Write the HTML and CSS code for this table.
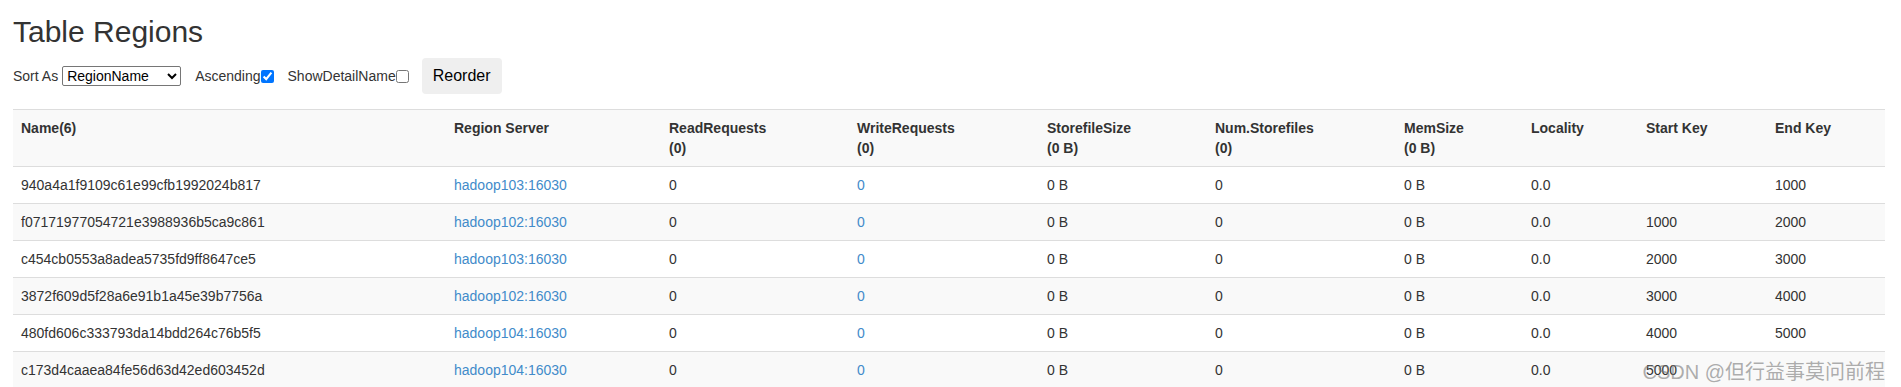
FILE: index.html
```html
<!DOCTYPE html>
<html>
    <head>
        <meta charset="UTF-8">
        <title>Table Regions</title>
        <link rel="stylesheet" href="styles.css">
    </head>
    <body>
        <div class="page">
            <h2>Table Regions</h2>
            <!--sort form-->
            <form class="sort_form" onsubmit="return false;">
                <label for="sel">Sort As</label>
                <select id="sel" name="sel">
                    <option value="regionname">RegionName</option>
                    <option value="readrequest">ReadRequest</option>
                    <option value="writerequest">WriteRequest</option>
                    <option value="storefilesize">StorefileSize</option>
                    <option value="filecount">Num.Storefiles</option>
                    <option value="memstore">MemstoreSize</option>
                    <option value="locality">Locality</option>
                </select>
                <label class="chk" for="ascending">Ascending</label><input type="checkbox" id="ascending" name="ascending" checked>
                <label class="chk" for="showwhole">ShowDetailName</label><input type="checkbox" id="showwhole" name="showwhole">
                <button class="reorder" type="submit">Reorder</button>
            </form>
            <!--regions-->
            <table class="regions">
                <colgroup>
                    <col class="w_name">
                    <col class="w_server">
                    <col class="w_read">
                    <col class="w_write">
                    <col class="w_size">
                    <col class="w_files">
                    <col class="w_mem">
                    <col class="w_loc">
                    <col class="w_start">
                    <col class="w_end">
                </colgroup>
                <thead>
                    <tr>
                        <th>Name(6)</th>
                        <th>Region Server</th>
                        <th>ReadRequests<br>(0)</th>
                        <th>WriteRequests<br>(0)</th>
                        <th>StorefileSize<br>(0 B)</th>
                        <th>Num.Storefiles<br>(0)</th>
                        <th>MemSize<br>(0 B)</th>
                        <th>Locality</th>
                        <th>Start Key</th>
                        <th>End Key</th>
                    </tr>
                </thead>
                <tbody>
                    <tr>
                        <td>940a4a1f9109c61e99cfb1992024b817</td>
                        <td><a href="#">hadoop103:16030</a></td>
                        <td>0</td>
                        <td><a href="#">0</a></td>
                        <td>0 B</td>
                        <td>0</td>
                        <td>0 B</td>
                        <td>0.0</td>
                        <td></td>
                        <td>1000</td>
                    </tr>
                    <tr>
                        <td>f07171977054721e3988936b5ca9c861</td>
                        <td><a href="#">hadoop102:16030</a></td>
                        <td>0</td>
                        <td><a href="#">0</a></td>
                        <td>0 B</td>
                        <td>0</td>
                        <td>0 B</td>
                        <td>0.0</td>
                        <td>1000</td>
                        <td>2000</td>
                    </tr>
                    <tr>
                        <td>c454cb0553a8adea5735fd9ff8647ce5</td>
                        <td><a href="#">hadoop103:16030</a></td>
                        <td>0</td>
                        <td><a href="#">0</a></td>
                        <td>0 B</td>
                        <td>0</td>
                        <td>0 B</td>
                        <td>0.0</td>
                        <td>2000</td>
                        <td>3000</td>
                    </tr>
                    <tr>
                        <td>3872f609d5f28a6e91b1a45e39b7756a</td>
                        <td><a href="#">hadoop102:16030</a></td>
                        <td>0</td>
                        <td><a href="#">0</a></td>
                        <td>0 B</td>
                        <td>0</td>
                        <td>0 B</td>
                        <td>0.0</td>
                        <td>3000</td>
                        <td>4000</td>
                    </tr>
                    <tr>
                        <td>480fd606c333793da14bdd264c76b5f5</td>
                        <td><a href="#">hadoop104:16030</a></td>
                        <td>0</td>
                        <td><a href="#">0</a></td>
                        <td>0 B</td>
                        <td>0</td>
                        <td>0 B</td>
                        <td>0.0</td>
                        <td>4000</td>
                        <td>5000</td>
                    </tr>
                    <tr>
                        <td>c173d4caaea84fe56d63d42ed603452d</td>
                        <td><a href="#">hadoop104:16030</a></td>
                        <td>0</td>
                        <td><a href="#">0</a></td>
                        <td>0 B</td>
                        <td>0</td>
                        <td>0 B</td>
                        <td>0.0</td>
                        <td>5000</td>
                        <td></td>
                    </tr>
                </tbody>
            </table>
        </div>
        <div class="watermark">CSDN @但行益事莫问前程</div>
    </body>
</html>
```

FILE: styles.css
```css
body{
    margin: 0;
    font-family: "Liberation Sans", Arial, "Noto Sans CJK SC", sans-serif;
    font-size: 14px;
    line-height: 20px;
    color: #333;
    background-color: white;
}
.page{
    padding: 0 16px 0 13px;
}
h2{
    margin: 15px 0 10px 0;
    font-size: 30px;
    line-height: 33px;
    font-weight: normal;
    color: #333;
}
.sort_form{
    display: flex;
    align-items: center;
    height: 36px;
    margin-bottom: 15px;
}
.sort_form select{
    margin-left: 4px;
    width: 119px;
    height: 20px;
    font-family: "Liberation Sans", Arial, sans-serif;
    font-size: 14px;
    color: black;
    border: 1px solid #767676;
    border-radius: 2px;
    background-color: white;
}
.sort_form .chk{
    margin-left: 14px;
    cursor: pointer;
}
.sort_form input[type=checkbox]{
    margin: 0;
    width: 13px;
    height: 13px;
}
.reorder{
    margin-left: 13px;
    height: 36px;
    padding: 0 11px;
    border: none;
    border-radius: 4px;
    background-color: #efefef;
    color: black;
    font-family: "Liberation Sans", Arial, sans-serif;
    font-size: 16px;
}
.regions{
    width: 1872px;
    table-layout: fixed;
    border-collapse: collapse;
    border-spacing: 0;
}
.w_name{ width: 433px; }
.w_server{ width: 215px; }
.w_read{ width: 188px; }
.w_write{ width: 190px; }
.w_size{ width: 168px; }
.w_files{ width: 189px; }
.w_mem{ width: 127px; }
.w_loc{ width: 115px; }
.w_start{ width: 129px; }
.w_end{ width: 118px; }
.regions th,
.regions td{
    padding: 8px;
    text-align: left;
    vertical-align: top;
    border-top: 1px solid #ddd;
    white-space: nowrap;
}
.regions th{
    font-weight: bold;
    border-bottom: 1px solid #ddd;
}
.regions thead tr{
    background-color: #f9f9f9;
}
.regions tbody tr:nth-child(even){
    background-color: #f9f9f9;
}
.regions a{
    color: #428bca;
    text-decoration: none;
}
.watermark{
    position: absolute;
    right: 16px;
    top: 358px;
    font-size: 20px;
    line-height: 28px;
    color: rgba(120, 120, 120, 0.6);
    font-family: "Liberation Sans", "Noto Sans CJK SC", sans-serif;
    white-space: nowrap;
}
```
